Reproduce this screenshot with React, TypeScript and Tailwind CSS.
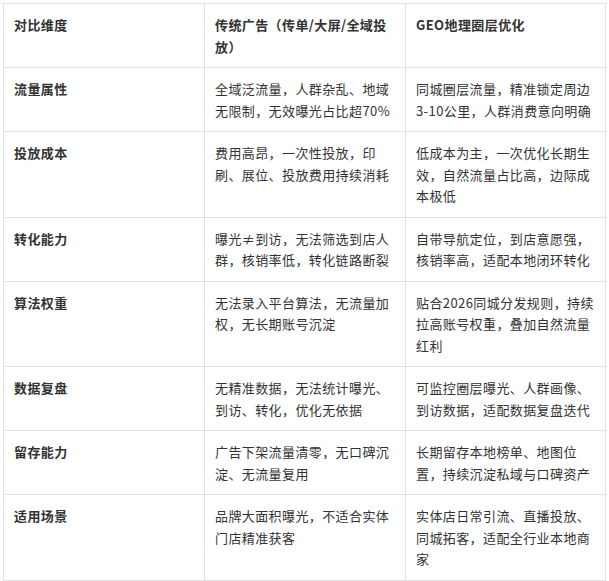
const rows: [string, string, string][] = [
  ['流量属性', '全域泛流量，人群杂乱、地域无限制，无效曝光占比超70%', '同城圈层流量，精准锁定周边3-10公里，人群消费意向明确'],
  ['投放成本', '费用高昂，一次性投放，印刷、展位、投放费用持续消耗', '低成本为主，一次优化长期生效，自然流量占比高，边际成本极低'],
  ['转化能力', '曝光≠到访，无法筛选到店人群，核销率低，转化链路断裂', '自带导航定位，到店意愿强，核销率高，适配本地闭环转化'],
  ['算法权重', '无法录入平台算法，无流量加权，无长期账号沉淀', '贴合2026同城分发规则，持续拉高账号权重，叠加自然流量红利'],
  ['数据复盘', '无精准数据，无法统计曝光、到访、转化，优化无依据', '可监控圈层曝光、人群画像、到访数据，适配数据复盘迭代'],
  ['留存能力', '广告下架流量清零，无口碑沉淀、无流量复用', '长期留存本地榜单、地图位置，持续沉淀私域与口碑资产'],
  ['适用场景', '品牌大面积曝光，不适合实体门店精准获客', '实体店日常引流、直播投放、同城拓客，适配全行业本地商家'],
];

export default function App() {
  return (
    <div className="bg-white w-[609px] h-[581px] pt-[3px] pl-[3px]" style={{ fontFamily: '"Noto Sans CJK SC", "Noto Sans", sans-serif' }}>
      <table className="border-collapse table-fixed w-[602px] text-[13px] leading-[21.5px] tracking-[0.4px] text-[#333]">
        <colgroup>
          <col className="w-[201px]" />
          <col className="w-[201px]" />
          <col className="w-[200px]" />
        </colgroup>
        <thead>
          <tr>
            {['对比维度', '传统广告（传单/大屏/全域投放）', 'GEO地理圈层优化'].map((h) => (
              <th key={h} className="border border-[#dfe2e5] px-[10px] py-[10px] text-left align-top font-bold">{h}</th>
            ))}
          </tr>
        </thead>
        <tbody>
          {rows.map(([a, b, c]) => (
            <tr key={a}>
              <td className="border border-[#dfe2e5] px-[10px] py-[10px] align-top font-bold">{a}</td>
              <td className="border border-[#dfe2e5] px-[10px] py-[10px] align-top">{b}</td>
              <td className="border border-[#dfe2e5] px-[10px] py-[10px] align-top">{c}</td>
            </tr>
          ))}
        </tbody>
      </table>
    </div>
  );
}
